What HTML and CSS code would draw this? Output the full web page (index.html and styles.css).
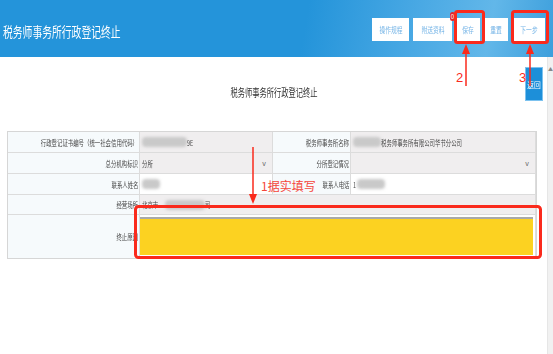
FILE: index.html
```html
<!DOCTYPE html>
<html lang="zh-CN">
<head>
  <meta charset="UTF-8" />
  <title>税务师事务所行政登记终止</title>
  <link rel="stylesheet" href="styles.css">
</head>
<body>
  <div class="header">
    <div class="title"><span class="sq">税务师事务所行政登记终止</span></div>
    <div class="actions">
      <button class="btn w37"><span class="sq">操作规程</span></button>
      <button class="btn w39"><span class="sq">附送资料</span><span class="badge">0</span></button>
      <button class="btn w25"><span class="sq">保存</span></button>
      <button class="btn w25"><span class="sq">重置</span></button>
      <button class="btn w32"><span class="sq">下一步</span></button>
    </div>
  </div>

  <div class="page">
    <div class="main">
      <div class="back-row">
        <button class="back-btn"><span class="sq">返回</span></button>
      </div>
      <h1><span class="sq">税务师事务所行政登记终止</span></h1>

      <!-- form table -->
      <div class="form">
        <div class="lbl"><span class="sq">行政登记证书编号（统一社会信用代码）</span></div>
        <div class="val ro"><span class="blur b50"></span><span class="sq">9E</span></div>
        <div class="lbl"><span class="sq">税务师事务所名称</span></div>
        <div class="val ro"><span class="blur b28"></span><span class="sq">税务师事务所有限公司华节分公司</span></div>

        <div class="lbl"><span class="sq">总分机构标识</span></div>
        <div class="val ro sel"><span class="sq">分所</span><span class="caret">v</span></div>
        <div class="lbl"><span class="sq">分所登记情况</span></div>
        <div class="val ro sel"><span></span><span class="caret">v</span></div>

        <div class="lbl"><span class="sq">联系人姓名</span></div>
        <div class="val"><span class="blur b18"></span></div>
        <div class="lbl"><span class="sq">联系人电话</span></div>
        <div class="val"><span class="sq">1</span><span class="blur b28"></span></div>

        <div class="lbl"><span class="sq">经营场所</span></div>
        <div class="val ro span3"><span class="sq">北京市</span><span class="blur b40"></span><span class="sq">司</span></div>

        <div class="lbl tall"><span class="sq">终止原因</span></div>
        <div class="val span3 tall"><div class="reason"></div></div>
      </div>
    </div>
    <div class="scrollbar"><span class="up">▲</span></div>
  </div>

  <!-- annotations -->
  <svg class="marks" width="553" height="354" viewBox="0 0 553 354">
    <g fill="none" stroke="#fa2a1c" stroke-width="3">
      <rect x="455.5" y="11.5" width="28" height="31" rx="2" />
      <rect x="512.5" y="11.5" width="35" height="31" rx="2" />
      <rect x="135.5" y="206.5" width="405" height="51" rx="3" />
    </g>
    <g stroke="#fa2a1c" stroke-width="1.5">
      <line x1="466" y1="52" x2="466" y2="86" />
      <line x1="530" y1="52" x2="530" y2="86" />
      <line x1="253" y1="147" x2="253" y2="196" />
    </g>
    <g fill="#fa2a1c">
      <polygon points="466,44 462,54 470,54" />
      <polygon points="530,44 526,54 534,54" />
      <polygon points="253,204 249,194 257,194" />
    </g>
    <g fill="#fa2a1c" font-family="'Liberation Sans', sans-serif" font-size="13">
      <text x="456" y="82">2</text>
      <text x="519" y="82">3</text>
    </g>
    <text x="261" y="191" fill="#f5463a" font-size="12" font-family="'Noto Sans CJK SC', sans-serif">1据实填写</text>
  </svg>
</body>
</html>
```

FILE: styles.css
```css
body {
  margin: 0;
  font-family: "Noto Sans CJK SC", sans-serif;
  background-color: #fff;
  width: 553px;
  height: 354px;
  overflow: hidden;
  position: relative;
}

/* narrow glyphs, as in the screenshot */
.sq {
  display: inline-block;
  white-space: nowrap;
  transform: scaleX(0.72);
}

.header {
  height: 57px;
  display: flex;
  align-items: center;
  justify-content: space-between;
  background: linear-gradient(100deg, #2494da 0%, #2494da 55%, #4aa9e4 75%, #62b7e9 88%, #3d9fdc 100%);
  box-sizing: border-box;
  padding: 0 8px 0 3px;
}

.title {
  color: #fff;
  font-size: 14px;
  margin-top: 5px;
}

.title .sq {
  transform-origin: left center;
  transform: scaleX(0.7);
}

.actions {
  display: flex;
  gap: 4px;
  margin-top: 1px;
}

.btn {
  position: relative;
  height: 23px;
  border: none;
  padding: 0;
  background-color: #fff;
  color: #73b3e6;
  font-family: "Noto Sans CJK SC", sans-serif;
  font-size: 8px;
}

.w37 { width: 37px; }
.w39 { width: 39px; }
.w25 { width: 24px; }
.w32 { width: 33px; }

.badge {
  position: absolute;
  top: -6px;
  right: -3px;
  width: 5px;
  height: 9px;
  border-radius: 3px;
  background-color: #e5262a;
  color: #fff;
  font-size: 6px;
  line-height: 9px;
}

.page {
  display: flex;
  height: 297px;
}

.main {
  flex: 1;
}

.back-row {
  display: flex;
  justify-content: flex-end;
  padding: 10px 4px 0 0;
  height: 34px;
}

.back-btn {
  width: 18px;
  height: 34px;
  border: 1px solid #7cc2ef;
  background-color: #1d8fd9;
  color: #fff;
  font-family: "Noto Sans CJK SC", sans-serif;
  font-size: 8px;
  padding: 0;
  display: flex;
  align-items: center;
  justify-content: center;
  overflow: hidden;
}

.back-btn .sq {
  transform: scaleX(0.85);
}

h1 {
  margin: -17px 0 0 0;
  text-align: center;
  font-weight: normal;
  font-size: 11px;
  color: #333;
}

h1 .sq {
  transform: scaleX(0.66);
}

.form {
  margin: 31px 10px 0 7px;
  display: grid;
  grid-template-columns: 132px 133px 78px 185px;
  grid-template-rows: 21px 21px 21px 20px 43px;
  border: 1px solid #d6d6d6;
  font-size: 7.5px;
  color: #444;
}

.lbl {
  background-color: #f6fafc;
  border-right: 1px solid #dcdcdc;
  border-bottom: 1px solid #dcdcdc;
  display: flex;
  align-items: center;
  justify-content: flex-end;
  padding-right: 1px;
  overflow: hidden;
}

.lbl .sq {
  transform-origin: right center;
}

.val {
  background-color: #fff;
  border-right: 1px solid #dcdcdc;
  border-bottom: 1px solid #dcdcdc;
  display: flex;
  align-items: center;
  padding-left: 2px;
  white-space: nowrap;
  overflow: hidden;
}

.val .sq {
  transform-origin: left center;
}

.val.ro {
  background-color: #f0eeef;
}

.sel {
  justify-content: space-between;
  padding-right: 6px;
}

.caret {
  color: #666;
  font-size: 7px;
}

.span3 {
  grid-column: span 3;
}

.form .tall {
  border-bottom: none;
}

.form .tall.val {
  padding: 0;
  align-items: stretch;
}

.reason {
  flex: 1;
  margin: 2px 2px 3px 0;
  background-color: #fcd221;
  border-top: 2px solid #a9a9a9;
}

.blur {
  display: inline-block;
  height: 10px;
  background-color: #c9c9c9;
  border-radius: 4px;
  filter: blur(1.5px);
}

.b18 { width: 18px; }
.b28 { width: 28px; }
.b40 { width: 40px; }
.b50 { width: 45px; }

.scrollbar {
  width: 8px;
  background-color: #f1f1f1;
  border-left: 1px solid #e6e6e6;
  text-align: center;
}

.up {
  display: block;
  font-size: 5px;
  color: #888;
  margin-top: 8px;
}

.marks {
  position: absolute;
  top: 0;
  left: 0;
  pointer-events: none;
}
```
